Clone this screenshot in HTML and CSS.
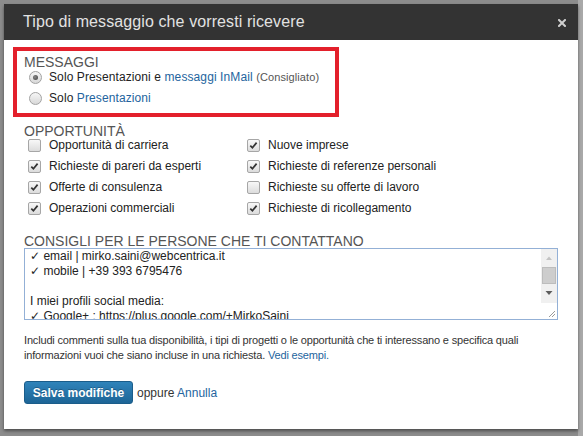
FILE: index.html
```html
<!DOCTYPE html>
<html lang="it">
<head>
<meta charset="utf-8">
<title>Tipo di messaggio che vorresti ricevere</title>
<link rel="stylesheet" href="styles.css">
</head>
<body>
<div class="dialog">
  <div class="header">
    <h1 class="title">Tipo di messaggio che vorresti ricevere</h1>
    <span class="close" aria-label="Chiudi"><svg width="8" height="8" viewBox="0 0 8 8"><path d="M1 1 L7 7 M7 1 L1 7" stroke="#cfcfcf" stroke-width="2" stroke-linecap="square"/></svg></span>
  </div>
  <div class="content">
    <div class="highlight">
      <h2 class="section-title">MESSAGGI</h2>
      <label class="radio-row"><span class="radio checked"></span><span>Solo Presentazioni e <a href="#" class="link">messaggi InMail</a> <small class="note">(Consigliato)</small></span></label>
      <label class="radio-row second"><span class="radio"></span><span>Solo <a href="#" class="link">Presentazioni</a></span></label>
    </div>

    <h2 class="section-title opp">OPPORTUNITÀ</h2>
    <div class="check-grid">
      <label class="check-row"><span class="cb"></span>Opportunità di carriera</label>
      <label class="check-row"><span class="cb"><svg width="11" height="11" viewBox="0 0 11 11"><path d="M2.3 5.6 L4.4 7.8 L8.6 2.6" fill="none" stroke="#333" stroke-width="1.7"/></svg></span>Nuove imprese</label>
      <label class="check-row"><span class="cb"><svg width="11" height="11" viewBox="0 0 11 11"><path d="M2.3 5.6 L4.4 7.8 L8.6 2.6" fill="none" stroke="#333" stroke-width="1.7"/></svg></span>Richieste di pareri da esperti</label>
      <label class="check-row"><span class="cb"><svg width="11" height="11" viewBox="0 0 11 11"><path d="M2.3 5.6 L4.4 7.8 L8.6 2.6" fill="none" stroke="#333" stroke-width="1.7"/></svg></span>Richieste di referenze personali</label>
      <label class="check-row"><span class="cb"><svg width="11" height="11" viewBox="0 0 11 11"><path d="M2.3 5.6 L4.4 7.8 L8.6 2.6" fill="none" stroke="#333" stroke-width="1.7"/></svg></span>Offerte di consulenza</label>
      <label class="check-row"><span class="cb"></span>Richieste su offerte di lavoro</label>
      <label class="check-row"><span class="cb"><svg width="11" height="11" viewBox="0 0 11 11"><path d="M2.3 5.6 L4.4 7.8 L8.6 2.6" fill="none" stroke="#333" stroke-width="1.7"/></svg></span>Operazioni commerciali</label>
      <label class="check-row"><span class="cb"><svg width="11" height="11" viewBox="0 0 11 11"><path d="M2.3 5.6 L4.4 7.8 L8.6 2.6" fill="none" stroke="#333" stroke-width="1.7"/></svg></span>Richieste di ricollegamento</label>
    </div>

    <h2 class="section-title consigli">CONSIGLI PER LE PERSONE CHE TI CONTATTANO</h2>
    <div class="textbox">
      <textarea class="textarea" spellcheck="false">✓ email | mirko.saini@webcentrica.it
✓ mobile | +39 393 6795476

I miei profili social media:
✓ Google+ : https://plus.google.com/+MirkoSaini</textarea>
      <div class="scrollbar">
        <svg width="16" height="70" viewBox="0 0 16 70">
          <rect x="0" y="0" width="16" height="54" fill="#f0f0f0"/>
          <path d="M5 11 L8 7.5 L11 11 Z" fill="#c3c3c3"/>
          <rect x="1.5" y="18.5" width="13" height="16" fill="#cdcdcd" stroke="#bcbcbc"/>
          <path d="M4.5 42 L11.5 42 L8 46 Z" fill="#5c5c5c"/>
          <rect x="0" y="54" width="16" height="16" fill="#ffffff"/>
          <path d="M14 62 L8 68 M14 65 L11 68" stroke="#9a9a9a" stroke-width="1"/>
        </svg>
      </div>
    </div>

    <p class="help">Includi commenti sulla tua disponibilità, i tipi di progetti o le opportunità che ti interessano e specifica quali informazioni vuoi che siano incluse in una richiesta. <a href="#" class="link">Vedi esempi.</a></p>

    <div class="actions">
      <button class="btn-primary" type="button">Salva modifiche</button>
      <span class="or">oppure <a href="#" class="link">Annulla</a></span>
    </div>
  </div>
</div>
</body>
</html>
```
FILE: styles.css
```css
* { box-sizing: border-box; }

html, body {
  margin: 0;
  height: 100%;
}

body {
  background: linear-gradient(to right, #8c8c8c 578px, #a9a9a9 578px);
  padding: 4px 5px 0 4px;
  font-family: "Liberation Sans", Arial, sans-serif;
  color: #333;
}

.dialog {
  width: 574px;
  height: 425px;
  background: #fff;
  box-shadow: 0 2px 3px rgba(0, 0, 0, 0.45);
  display: flex;
  flex-direction: column;
}

.header {
  height: 36px;
  background: #333333;
  display: flex;
  align-items: center;
  justify-content: space-between;
  padding: 0 12px 0 19px;
}

.title {
  margin: 0;
  font-size: 16px;
  font-weight: normal;
  color: #e2e2e2;
  line-height: 36px;
  letter-spacing: 0.1px;
}

.close {
  display: flex;
  align-items: center;
  margin-top: 1px;
}

.content {
  padding: 7px 20px 0 20px;
}

.highlight {
  width: 326px;
  margin-left: -11px;
  border: 4px solid #e3202b;
  padding: 3px 7px 8px 7px;
}

.section-title {
  margin: 0;
  font-size: 14px;
  font-weight: normal;
  color: #555;
  line-height: 16px;
}

.link {
  color: #23649e;
  text-decoration: none;
}

.radio-row {
  display: flex;
  align-items: center;
  height: 14px;
  font-size: 12px;
  line-height: 14px;
  color: #222;
  padding-left: 5px;
  letter-spacing: 0.1px;
}

.radio-row.second {
  margin-top: 7px;
}

.radio {
  width: 13px;
  height: 13px;
  flex: none;
  border-radius: 50%;
  border: 1px solid #a2a2a2;
  background: linear-gradient(#f6f6f6, #d8d8d8);
  margin-right: 7px;
  display: flex;
  align-items: center;
  justify-content: center;
}

.radio.checked::after {
  content: "";
  width: 5px;
  height: 5px;
  border-radius: 50%;
  background: radial-gradient(circle at 40% 40%, #888, #3f3f3f);
}

.note {
  font-size: 11px;
  color: #555;
}

.opp {
  margin-top: 7px;
  line-height: 14px;
}

.check-grid {
  display: grid;
  grid-template-columns: 219px 1fr;
  grid-auto-rows: 14px;
  row-gap: 7px;
  padding-left: 4px;
}

.check-row {
  display: flex;
  align-items: center;
  font-size: 12px;
  line-height: 14px;
  color: #222;
}

.cb {
  width: 13px;
  height: 13px;
  flex: none;
  border: 1px solid #a6a6a6;
  border-radius: 2px;
  background: linear-gradient(#f8f8f8, #dcdcdc);
  margin-right: 8px;
  display: flex;
  align-items: center;
  justify-content: center;
}

.cb svg {
  display: block;
}

.consigli {
  margin-top: 19px;
  line-height: 14px;
}

.textbox {
  width: 534px;
  height: 72px;
  border: 1px solid #93b0d6;
  display: flex;
}

.textarea {
  flex: 1;
  border: 0;
  outline: none;
  resize: none;
  overflow: hidden;
  padding: 0 0 0 5px;
  margin: 0;
  font-family: "Liberation Sans", "DejaVu Sans", Arial, sans-serif;
  font-size: 12px;
  line-height: 15px;
  color: #222;
  background: #fff;
}

.scrollbar {
  width: 16px;
  flex: none;
}

.scrollbar svg {
  display: block;
}

.help {
  margin: 13px 0 0 0;
  font-size: 11px;
  line-height: 15px;
  letter-spacing: -0.17px;
  color: #333;
}

.actions {
  margin-top: 18px;
  display: flex;
  align-items: center;
  font-size: 12px;
  color: #333;
}

.btn-primary {
  height: 23px;
  width: 109px;
  padding: 0;
  border: 1px solid #1b5d8a;
  border-radius: 3px;
  background: linear-gradient(#2f83ba, #1d6596);
  color: #fff;
  font-family: "Liberation Sans", Arial, sans-serif;
  font-size: 12px;
  font-weight: bold;
  text-shadow: 0 -1px 0 rgba(0, 0, 0, 0.25);
  margin-right: 4px;
}

.or .link {
  font-size: 12px;
}
```
